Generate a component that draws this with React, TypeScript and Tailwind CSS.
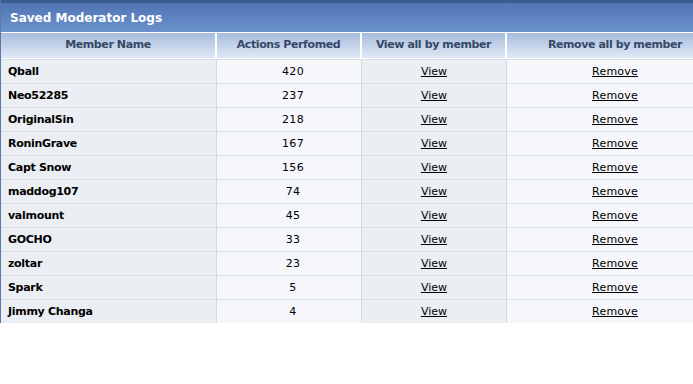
import React from "react";

const logs = [
  { name: "Qball", count: 420 },
  { name: "Neo52285", count: 237 },
  { name: "OriginalSin", count: 218 },
  { name: "RoninGrave", count: 167 },
  { name: "Capt Snow", count: 156 },
  { name: "maddog107", count: 74 },
  { name: "valmount", count: 45 },
  { name: "GOCHO", count: 33 },
  { name: "zoltar", count: 23 },
  { name: "Spark", count: 5 },
  { name: "Jimmy Changa", count: 4 },
];

export default function App() {
  return (
    <div className="w-[693px] h-[384px] bg-white font-['DejaVu_Sans',Verdana,sans-serif] text-[11px] text-black">
      <div className="border-l border-[#5a78a8]">
        <div className="h-[32px] border-t-[3px] border-[#3d5d92] bg-gradient-to-b from-[#5174b3] to-[#6c93cd] pl-[9px] flex items-center">
          <span className="text-[12px] font-bold text-white">
            Saved Moderator Logs
          </span>
        </div>
        <div className="grid grid-cols-[216px_145px_145px_1fr] border-t border-white">
          <HeaderCell>Member Name</HeaderCell>
          <HeaderCell>Actions Perfomed</HeaderCell>
          <HeaderCell>View all by member</HeaderCell>
          <HeaderCell last>Remove all by member</HeaderCell>
          {logs.map((log) => (
            <React.Fragment key={log.name}>
              <div className="h-[24px] flex items-center pt-[2px] pl-[7px] bg-[#ebeef2] border-t border-[#dbe0e7] border-r border-r-[#d2d9e3] font-bold tracking-[-0.3px]">
                {log.name}
              </div>
              <div className="h-[24px] flex items-center justify-center pt-[2px] pl-[8px] bg-[#f5f7fa] border-t border-[#dbe0e7] border-r border-r-[#d2d9e3] tracking-[0.3px]">
                {log.count}
              </div>
              <div className="h-[24px] flex items-center justify-center pt-[2px] bg-[#ebeef2] border-t border-[#dbe0e7] border-r border-r-[#d2d9e3]">
                <a href="#" className="underline text-black">View</a>
              </div>
              <div className="h-[24px] flex items-center justify-center pt-[2px] bg-[#f5f7fa] border-t border-[#dbe0e7] pl-[30px]">
                <a href="#" className="underline text-black tracking-[0.2px]">Remove</a>
              </div>
            </React.Fragment>
          ))}
        </div>
      </div>
    </div>
  );
}

function HeaderCell({ children, last }: { children: React.ReactNode; last?: boolean }) {
  return (
    <div
      className={`h-[26px] flex items-center justify-center bg-gradient-to-b from-[#a7bcdd] to-[#e0e9f6] font-bold text-[#364868] tracking-[-0.4px] border-b border-white ${
        last ? "pl-[30px]" : "border-r-2 border-r-white"
      }`}
    >
      {children}
    </div>
  );
}
